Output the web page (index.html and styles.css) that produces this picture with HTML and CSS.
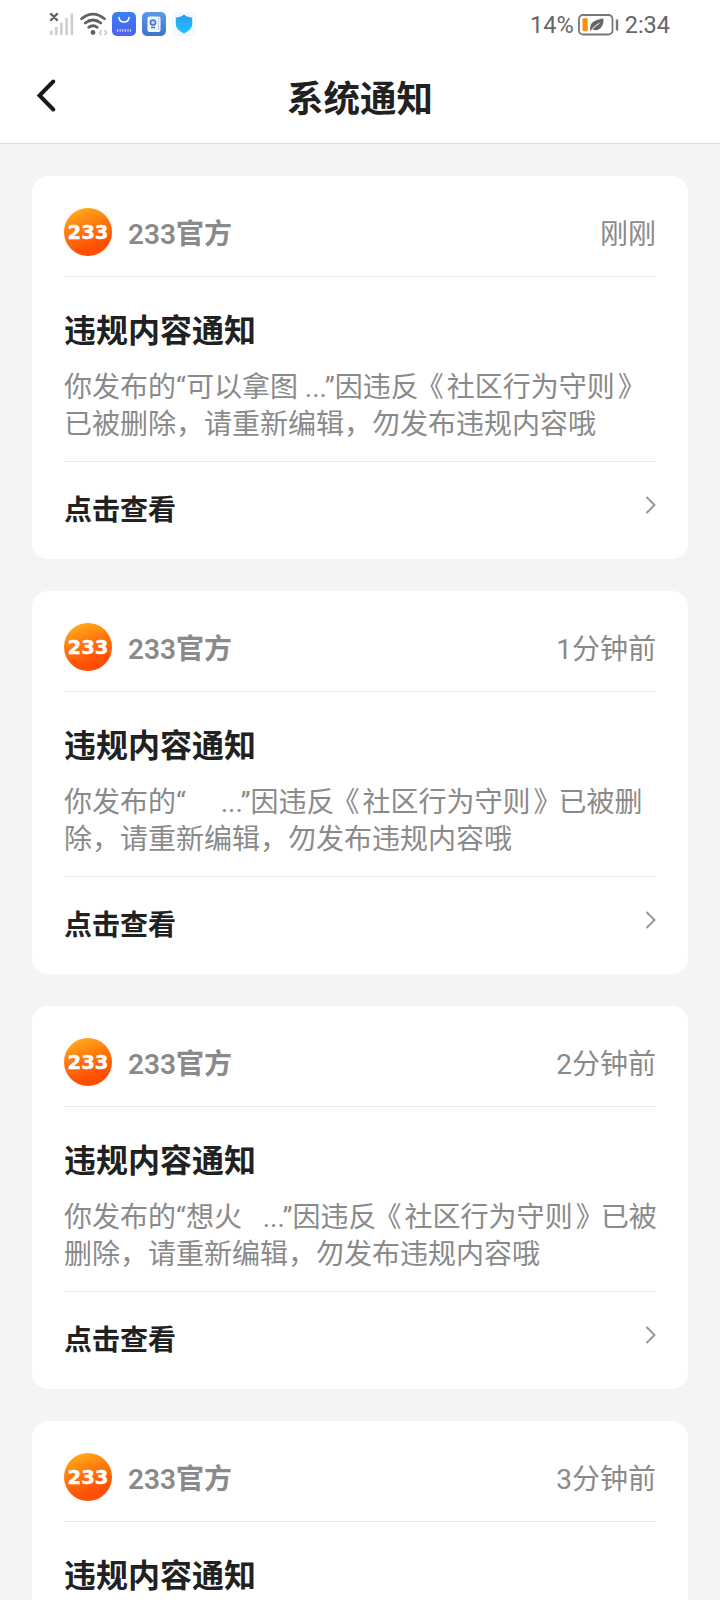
FILE: index.html
```html
<!DOCTYPE html>
<html lang="zh-CN">
<head>
<meta charset="utf-8">
<title>系统通知</title>
<link rel="stylesheet" href="styles.css">
</head>
<body>
<svg class="defs" width="0" height="0" aria-hidden="true">
  <defs>
    <linearGradient id="logo-fill" x1="0.2" y1="0" x2="0.5" y2="0.85">
      <stop offset="0" stop-color="#ffb01c"/>
      <stop offset="0.5" stop-color="#ff7a0c"/>
      <stop offset="1" stop-color="#ff4f05"/>
    </linearGradient>
    <symbol id="logo" viewBox="0 0 48 48">
      <circle cx="24" cy="24" r="24" fill="url(#logo-fill)"/>
      <text class="logo-text" x="3.5" y="31.3" textLength="41" lengthAdjust="spacingAndGlyphs">233</text>
    </symbol>
    <symbol id="chevron" viewBox="0 0 12 20">
      <path d="M2.500 2 10.500 10 2.500 18" fill="none" stroke="#999" stroke-width="2"/>
    </symbol>
  </defs>
</svg>
<header class="header">
  <div class="status">
    <svg class="status-icons" width="160" height="48" viewBox="40 0 160 48">
      <defs>
        <linearGradient id="app-a" x1="0" y1="0" x2="0" y2="1"><stop offset="0" stop-color="#3c80f3"/><stop offset="1" stop-color="#5060ee"/></linearGradient>
        <linearGradient id="app-b" x1="0" y1="0" x2="0" y2="1"><stop offset="0" stop-color="#5a9be8"/><stop offset="1" stop-color="#3f72cb"/></linearGradient>
        <linearGradient id="app-c" x1="0" y1="0" x2="0" y2="1"><stop offset="0" stop-color="#2f9cf2"/><stop offset="1" stop-color="#1fc2fb"/></linearGradient>
      </defs>
      <path d="M51 14l6 6M57 14l-6 6" stroke="#606060" stroke-width="2.4" stroke-linecap="round"/>
      <g fill="#cecece">
        <rect x="50" y="30.500" width="2.600" height="4.500"/><rect x="55" y="27" width="2.600" height="8"/>
        <rect x="60" y="22.500" width="2.600" height="12.500"/><rect x="65.300" y="18" width="2.600" height="17"/>
        <rect x="70.500" y="13.500" width="2.600" height="21.500"/>
      </g>
      <g fill="none" stroke="#606060" stroke-width="2.700" stroke-linecap="round">
        <path d="M81.500 18.700Q93 9.500 104.500 18.700"/>
        <path d="M85.200 23Q93 17 100.800 23"/>
        <path d="M88.700 27.300Q93 24.200 97.300 27.300"/>
      </g>
      <circle cx="93" cy="32.500" r="2.400" fill="#606060"/>
      <path d="M101.500 30l-2 2.500 2 2.500M104.500 30l2 2.500-2 2.500" fill="none" stroke="#c5c5c5" stroke-width="1.400"/>
      <rect x="112" y="12" width="24" height="24" rx="5" fill="url(#app-a)"/>
      <path d="M119 17.500Q119.500 22 124 22T129 17.500" fill="none" stroke="#fff" stroke-width="1.700" stroke-linecap="round"/>
      <path d="M117 30.500h14" stroke="#d2dcff" stroke-width="2.400" stroke-dasharray="1.200 1.400"/>
      <rect x="142" y="12" width="24" height="24" rx="5" fill="url(#app-b)"/>
      <rect x="147.500" y="16.500" width="13" height="15.500" rx="2" fill="#f5f9ff"/>
      <path d="M158.500 18v12.500" stroke="#9fbbe4" stroke-width="1.300" stroke-dasharray="1.500 1"/>
      <circle cx="153" cy="22.500" r="2.600" fill="#bdd6f6" stroke="#3f72bd" stroke-width="1.500"/>
      <path d="M151 27.500h4" stroke="#3f72bd" stroke-width="1.500"/>
      <rect x="172" y="12" width="24" height="24" rx="5" fill="#f3f9fd"/>
      <path d="M184 14.500c2 2 5.500 2.800 8.200 3v6.500c0 4.500-4.200 7.600-8.200 9.500-4-1.900-8.200-5-8.200-9.500v-6.500c2.700-.2 6.200-1 8.200-3z" fill="url(#app-c)"/>
    </svg>
    <div class="status-right">
      <span class="battery-level">14%</span>
      <svg class="battery" width="42" height="22" viewBox="0 0 42 22">
        <rect x="1" y="1" width="33.500" height="19.500" rx="4" fill="none" stroke="#777" stroke-width="1.800"/>
        <rect x="4.500" y="4.200" width="5.200" height="13" rx="1" fill="#fd8d10"/>
        <path d="M39 5.500v11" stroke="#777" stroke-width="2.400"/>
        <path d="M12.500 17.500C10.500 8 17 6 25.500 4.500 26 12 21.500 18.500 14 15.500z" fill="#666"/>
        <path d="M12.300 18Q15.500 12.500 21.500 9" fill="none" stroke="#fff" stroke-width="1"/>
      </svg>
      <span class="clock">2:34</span>
    </div>
  </div>
  <div class="navbar">
    <svg class="back" width="24" height="36" viewBox="0 0 24 36"><path d="M18.300 3.500 4.500 17.500 18.300 31.500" fill="none" stroke="#1a1a1a" stroke-width="4" stroke-linecap="round" stroke-linejoin="miter"/></svg>
    <h1 class="page-title">系统通知</h1>
  </div>
</header>
<main class="list">
  <article class="card">
    <div class="card-head"><svg class="logo"><use href="#logo"/></svg><span class="author">233官方</span><time class="time">刚刚</time></div>
    <div class="card-body">
      <h2 class="card-title">违规内容通知</h2>
      <p class="message">你发布的“可以拿图 ...”因违<span class="tight">反</span><span class="loose">《</span>社区行为守<span class="loose">则</span><span class="tight">》</span><br>已被删除，请重新编辑，勿发布违规内容哦</p>
    </div>
    <div class="card-action"><span>点击查看</span><svg class="chevron"><use href="#chevron"/></svg></div>
  </article>
  <article class="card">
    <div class="card-head"><svg class="logo"><use href="#logo"/></svg><span class="author">233官方</span><time class="time">1分钟前</time></div>
    <div class="card-body">
      <h2 class="card-title">违规内容通知</h2>
      <p class="message">你发布的“     ...”因违<span class="tight">反</span><span class="loose">《</span>社区行为守<span class="loose">则</span><span class="tight">》</span>已被删<br>除，请重新编辑，勿发布违规内容哦</p>
    </div>
    <div class="card-action"><span>点击查看</span><svg class="chevron"><use href="#chevron"/></svg></div>
  </article>
  <article class="card">
    <div class="card-head"><svg class="logo"><use href="#logo"/></svg><span class="author">233官方</span><time class="time">2分钟前</time></div>
    <div class="card-body">
      <h2 class="card-title">违规内容通知</h2>
      <p class="message">你发布的“想火   ...”因违<span class="tight">反</span><span class="loose">《</span>社区行为守<span class="loose">则</span><span class="tight">》</span>已被<br>删除，请重新编辑，勿发布违规内容哦</p>
    </div>
    <div class="card-action"><span>点击查看</span><svg class="chevron"><use href="#chevron"/></svg></div>
  </article>
  <article class="card">
    <div class="card-head"><svg class="logo"><use href="#logo"/></svg><span class="author">233官方</span><time class="time">3分钟前</time></div>
    <div class="card-body">
      <h2 class="card-title">违规内容通知</h2>
    </div>
  </article>
</main>
</body>
</html>
```

FILE: styles.css
```css
* {
  box-sizing: border-box;
}

body {
  margin: 0;
  height: 1600px;
  display: flex;
  flex-direction: column;
  overflow: hidden;
  background: #f4f4f4;
  color: #212121;
  font-family: Roboto, "Noto Sans CJK SC", sans-serif;
}

.defs {
  position: absolute;
}

.header {
  flex: none;
  height: 144px;
  background: #fff;
  border-bottom: 1px solid #dedede;
}

.status {
  height: 48px;
  padding: 0 50px 0 40px;
  display: flex;
  justify-content: space-between;
}

.status-right {
  display: flex;
  align-items: center;
  height: 50px;
  font-size: 23.500px;
  color: #666;
}

.battery {
  margin: -1px 5px 0 4px;
}

.navbar {
  height: 95px;
  display: grid;
  grid-template-columns: 60px 1fr 60px;
  align-items: center;
  padding: 0 35px;
}

.page-title {
  margin: 8px 0 0;
  text-align: center;
  font-size: 36.500px;
  line-height: 48px;
  font-weight: 700;
}

.list {
  flex: 1;
  min-height: 0;
  overflow: hidden;
  padding: 32px 32px 0;
  display: flex;
  flex-direction: column;
  gap: 32px;
}

.card {
  flex: none;
  height: 383px;
  padding: 0 32px;
  border-radius: 16px;
  background: #fff;
}

.card:last-child {
  height: 179px;
  border-radius: 16px 16px 0 0;
}

.card-head {
  height: 101px;
  padding-top: 12px;
  display: flex;
  align-items: center;
  border-bottom: 1px solid #ebebeb;
  font-size: 28px;
  line-height: 40px;
  color: #8a8a8a;
}

.logo {
  width: 48px;
  height: 48px;
  margin-right: 16px;
}

.logo-text {
  font: 700 20px "DejaVu Sans", sans-serif;
  fill: #fff;
  stroke: #fff;
  stroke-width: 0.4px;
}

.author,
.time {
  padding-top: 5px;
}

.author {
  font-weight: 600;
}

.time {
  margin-left: auto;
}

.card-body {
  height: 185px;
  padding-top: 30px;
  border-bottom: 1px solid #ebebeb;
}

.card:last-child .card-body {
  height: 78px;
  border-bottom: 0;
}

.card-title {
  margin: 0 0 14px;
  font-size: 32px;
  line-height: 48px;
  font-weight: 700;
}

.message {
  margin: 0;
  font-size: 28px;
  line-height: 37px;
  white-space: pre;
  color: #8a8a8a;
}

/* Centre the title marks in their full-width cells. */
.tight {
  letter-spacing: -3px;
}

.loose {
  letter-spacing: 3px;
}

.card-action {
  height: 96px;
  padding-bottom: 4px;
  display: flex;
  align-items: center;
  justify-content: space-between;
  font-size: 28px;
  font-weight: 700;
}

.chevron {
  width: 12px;
  height: 20px;
  margin-top: -7px;
}
```
